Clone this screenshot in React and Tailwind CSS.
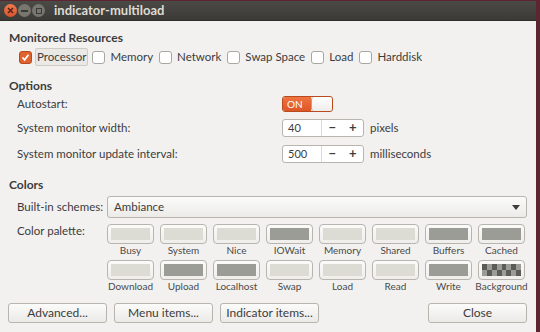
import React from 'react';

const font = { fontFamily: 'Lato, "Open Sans", sans-serif' };

const resources = [
  { name: 'Processor', checked: true },
  { name: 'Memory' },
  { name: 'Network' },
  { name: 'Swap Space' },
  { name: 'Load' },
  { name: 'Harddisk' },
];

const LIGHT = '#dcdcd4';
const GRAY = '#9c9c96';

const palette = [
  [
    { name: 'Busy', color: LIGHT },
    { name: 'System', color: LIGHT },
    { name: 'Nice', color: LIGHT },
    { name: 'IOWait', color: GRAY },
    { name: 'Memory', color: LIGHT },
    { name: 'Shared', color: LIGHT },
    { name: 'Buffers', color: GRAY },
    { name: 'Cached', color: GRAY },
  ],
  [
    { name: 'Download', color: LIGHT },
    { name: 'Upload', color: GRAY },
    { name: 'Localhost', color: GRAY },
    { name: 'Swap', color: LIGHT },
    { name: 'Load', color: LIGHT },
    { name: 'Read', color: LIGHT },
    { name: 'Write', color: GRAY },
    { name: 'Background', checker: true },
  ],
];

const Checkbox = ({ checked }) =>
  checked ? (
    <span className="w-[13px] h-[13px] rounded-[3px] bg-[#e0622e] border border-[#b84a1f] flex items-center justify-center">
      <svg width="9" height="9" viewBox="0 0 9 9">
        <path d="M1.5 4.5 L3.6 6.8 L7.5 1.8" stroke="#fff" strokeWidth="1.8" fill="none" />
      </svg>
    </span>
  ) : (
    <span className="w-[13px] h-[13px] rounded-[3px] bg-white border border-[#a9a7a2]" />
  );

const Button = ({ children, className = '' }) => (
  <div
    className={`h-[20px] flex items-center justify-center rounded-[3px] border border-[#b8b5ae] bg-gradient-to-b from-[#fbfbfa] to-[#ebeae7] text-[12px] text-[#3c3c3c] ${className}`}
  >
    {children}
  </div>
);

const SpinBox = ({ value }) => (
  <div className="w-[82px] h-[18px] flex rounded-[3px] border border-[#b8b5ae] bg-white text-[11px] text-[#3c3c3c]">
    <div className="w-[40px] pl-[5px] flex items-center border-r border-[#dcdad5]">{value}</div>
    <div className="w-[21px] flex items-center justify-center text-[13px] font-bold">−</div>
    <div className="w-[21px] flex items-center justify-center text-[13px] font-bold">+</div>
  </div>
);

const Swatch = ({ item }) => (
  <div className="w-[47px] flex flex-col items-center">
    <div className="w-[47px] h-[20px] rounded-[4px] border border-[#b8b5ae] bg-gradient-to-b from-[#fbfbfa] to-[#efeeeb] p-[3px]">
      {item.checker ? (
        <div className="w-full h-full grid grid-cols-8 grid-rows-2">
          {Array.from({ length: 16 }, (_, i) => (
            <div
              key={i}
              className={(Math.floor(i / 8) + (i % 8)) % 2 === 0 ? 'bg-[#5b5b58]' : 'bg-[#9c9c96]'}
            />
          ))}
        </div>
      ) : (
        <div className="w-full h-full" style={{ backgroundColor: item.color }} />
      )}
    </div>
    <div className="h-[11px] leading-[12px] text-[10px] text-[#4a4a4a] whitespace-nowrap">{item.name}</div>
  </div>
);

export default function App() {
  return (
    <div className="w-[540px] h-[332px] bg-[#5c2630] flex flex-col overflow-hidden" style={font}>
      <div className="w-[536px] h-[332px] flex flex-col bg-[#f2f1f0] border-t border-[#5c2630]">
        {/* Title bar */}
        <div className="h-[20px] flex items-center bg-gradient-to-b from-[#4b4a46] to-[#3b3a36] border-b border-[#2f2e2b]">
          <div className="flex items-center gap-[1px] pl-[4px]">
            <span className="w-[13px] h-[13px] rounded-full bg-gradient-to-b from-[#f07a4f] to-[#d9512a] flex items-center justify-center">
              <svg width="7" height="7" viewBox="0 0 7 7">
                <path d="M1 1 L6 6 M6 1 L1 6" stroke="#4a2014" strokeWidth="1.4" />
              </svg>
            </span>
            <span className="w-[13px] h-[13px] rounded-full bg-[#77766f] flex items-center justify-center">
              <span className="w-[7px] h-[2px] bg-[#3b3a36]" />
            </span>
            <span className="w-[13px] h-[13px] rounded-full bg-[#77766f] flex items-center justify-center">
              <span className="w-[6px] h-[6px] border border-[#3b3a36]" />
            </span>
          </div>
          <span className="ml-[9px] text-[13px] font-bold text-[#dfdbd2]">indicator-multiload</span>
        </div>

        <div className="flex flex-col px-[9px] text-[11.5px] text-[#3c3c3c]">
          {/* Monitored resources */}
          <div className="mt-[9px] h-[16px] leading-[16px] font-bold text-[12px]">Monitored Resources</div>
          <div className="mt-[2px] h-[18px] flex items-center pl-[10px] gap-[4px]">
            {resources.map((r) => (
              <div key={r.name} className="flex items-center gap-[3px]">
                <Checkbox checked={r.checked} />
                <span
                  className={`px-[1px] leading-[16px] ${
                    r.checked ? 'border border-[#cfccc6] rounded-[2px] bg-[#ebe9e6]' : 'border border-transparent'
                  }`}
                >
                  {r.name}
                </span>
              </div>
            ))}
          </div>

          {/* Options */}
          <div className="mt-[12px] h-[16px] leading-[16px] font-bold text-[12px]">Options</div>
          <div className="flex flex-col pl-[8px]">
            <div className="mt-[2px] h-[16px] flex items-center">
              <span className="w-[265px]">Autostart:</span>
              <div className="w-[51px] h-[16px] flex rounded-[3px] border border-[#b84a1f] overflow-hidden">
                <div className="w-[28px] bg-gradient-to-b from-[#f0743f] to-[#dd5725] text-white text-[10px] flex items-center pl-[4px]">
                  ON
                </div>
                <div className="flex-1 bg-gradient-to-b from-white to-[#eeedea] rounded-[3px] border-l border-[#a9a7a2]" />
              </div>
            </div>
            <div className="mt-[7px] h-[18px] flex items-center">
              <span className="w-[265px]">System monitor width:</span>
              <SpinBox value="40" />
              <span className="ml-[6px]">pixels</span>
            </div>
            <div className="mt-[8px] h-[18px] flex items-center">
              <span className="w-[265px]">System monitor update interval:</span>
              <SpinBox value="500" />
              <span className="ml-[6px]">milliseconds</span>
            </div>
          </div>

          {/* Colors */}
          <div className="mt-[14px] h-[16px] leading-[16px] font-bold text-[12px]">Colors</div>
          <div className="flex flex-col pl-[8px]">
            <div className="mt-[3px] h-[22px] flex items-center">
              <span className="w-[90px] whitespace-nowrap">Built-in schemes:</span>
              <div className="w-[420px] h-[22px] flex items-center justify-between rounded-[3px] border border-[#b8b5ae] bg-gradient-to-b from-[#fbfbfa] to-[#ecebe8] px-[6px]">
                <span>Ambiance</span>
                <svg width="8" height="5" viewBox="0 0 8 5">
                  <path d="M0 0 L8 0 L4 5 Z" fill="#3c3c3c" />
                </svg>
              </div>
            </div>
            <div className="mt-[6px] flex">
              <span className="w-[90px] leading-[14px] whitespace-nowrap">Color palette:</span>
              <div className="flex flex-col gap-[5px]">
                {palette.map((row, ri) => (
                  <div key={ri} className="flex gap-[6px]">
                    {row.map((item) => (
                      <Swatch key={item.name} item={item} />
                    ))}
                  </div>
                ))}
              </div>
            </div>
          </div>

          {/* Buttons */}
          <div className="mt-[12px] flex">
            <Button className="w-[99px] -ml-[1px]">Advanced...</Button>
            <Button className="w-[99px] ml-[7px]">Menu items...</Button>
            <Button className="w-[99px] ml-[7px]">Indicator items...</Button>
            <Button className="w-[99px] ml-auto">Close</Button>
          </div>
        </div>
      </div>
    </div>
  );
}
